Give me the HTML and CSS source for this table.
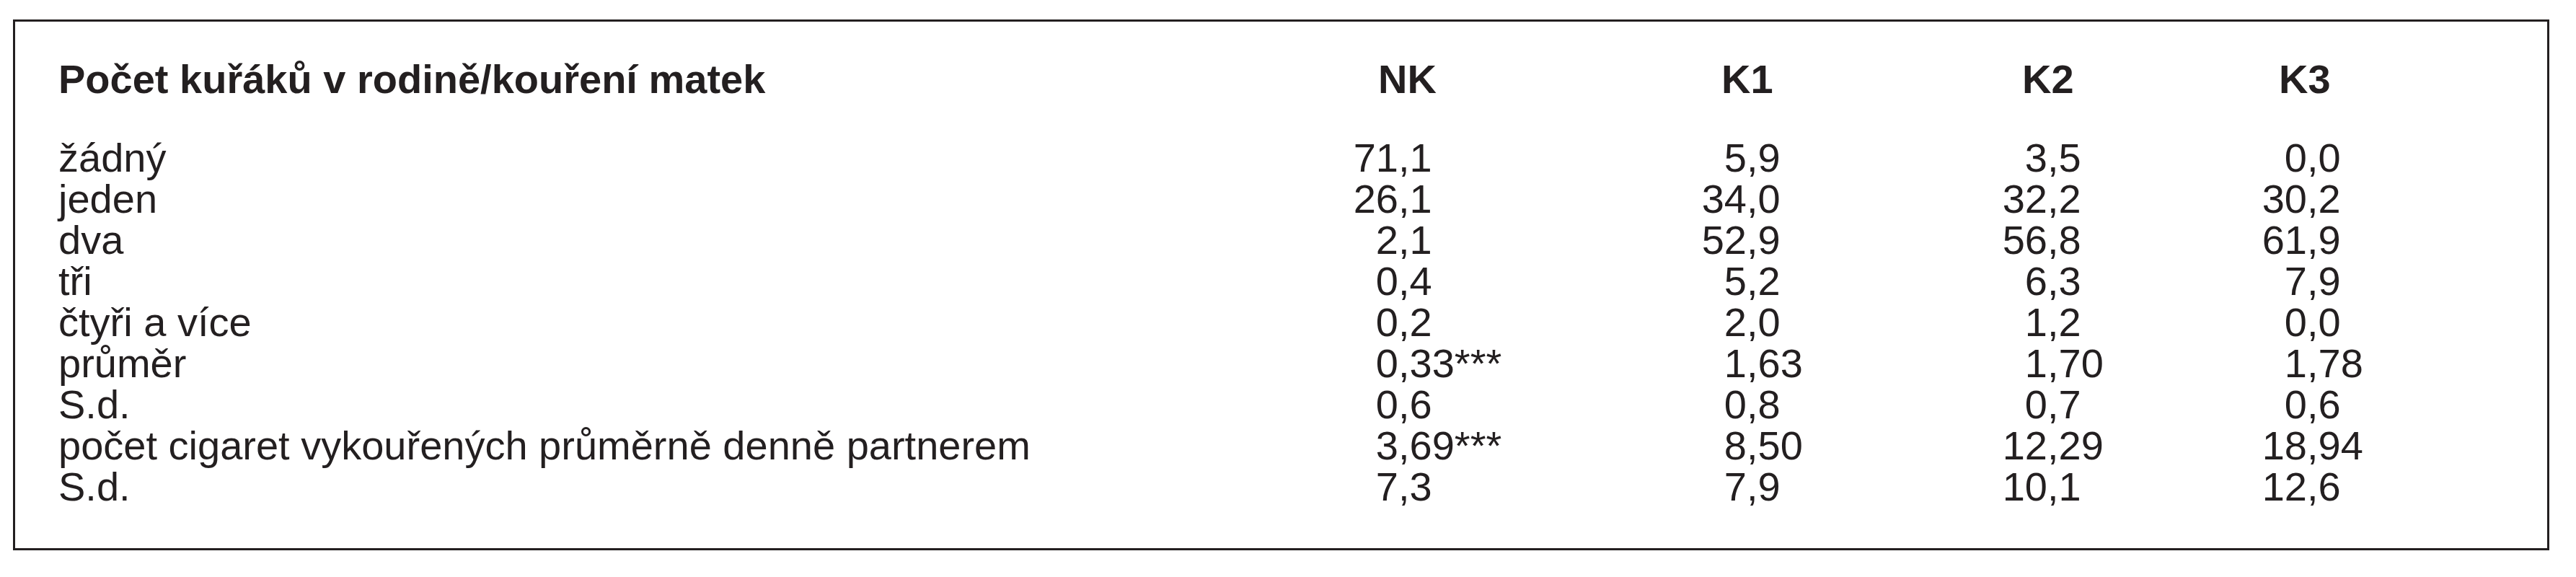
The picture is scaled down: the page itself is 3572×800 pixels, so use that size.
FILE: index.html
```html
<!DOCTYPE html>
<html lang="cs">
<head>
<meta charset="utf-8">
<title>Počet kuřáků v rodině</title>
<link rel="stylesheet" href="styles.css">
</head>
<body>
<div class="box">
  <div class="grid">
    <div class="hd">Počet kuřáků v rodině/kouření matek</div>
    <div class="hd col-nk">NK</div>
    <div class="hd col-k1">K1</div>
    <div class="hd col-k2">K2</div>
    <div class="hd col-k3">K3</div>

    <div class="lbl">žádný</div>
    <div class="num"><span class="i">71</span>,1</div>
    <div class="num"><span class="i">5</span>,9</div>
    <div class="num"><span class="i">3</span>,5</div>
    <div class="num"><span class="i">0</span>,0</div>

    <div class="lbl">jeden</div>
    <div class="num"><span class="i">26</span>,1</div>
    <div class="num"><span class="i">34</span>,0</div>
    <div class="num"><span class="i">32</span>,2</div>
    <div class="num"><span class="i">30</span>,2</div>

    <div class="lbl">dva</div>
    <div class="num"><span class="i">2</span>,1</div>
    <div class="num"><span class="i">52</span>,9</div>
    <div class="num"><span class="i">56</span>,8</div>
    <div class="num"><span class="i">61</span>,9</div>

    <div class="lbl">tři</div>
    <div class="num"><span class="i">0</span>,4</div>
    <div class="num"><span class="i">5</span>,2</div>
    <div class="num"><span class="i">6</span>,3</div>
    <div class="num"><span class="i">7</span>,9</div>

    <div class="lbl">čtyři a více</div>
    <div class="num"><span class="i">0</span>,2</div>
    <div class="num"><span class="i">2</span>,0</div>
    <div class="num"><span class="i">1</span>,2</div>
    <div class="num"><span class="i">0</span>,0</div>

    <div class="lbl">průměr</div>
    <div class="num"><span class="i">0</span>,33***</div>
    <div class="num"><span class="i">1</span>,63</div>
    <div class="num"><span class="i">1</span>,70</div>
    <div class="num"><span class="i">1</span>,78</div>

    <div class="lbl">S.d.</div>
    <div class="num"><span class="i">0</span>,6</div>
    <div class="num"><span class="i">0</span>,8</div>
    <div class="num"><span class="i">0</span>,7</div>
    <div class="num"><span class="i">0</span>,6</div>

    <div class="lbl">počet cigaret vykouřených průměrně denně partnerem</div>
    <div class="num"><span class="i">3</span>,69***</div>
    <div class="num"><span class="i">8</span>,50</div>
    <div class="num"><span class="i">12</span>,29</div>
    <div class="num"><span class="i">18</span>,94</div>

    <div class="lbl">S.d.</div>
    <div class="num"><span class="i">7</span>,3</div>
    <div class="num"><span class="i">7</span>,9</div>
    <div class="num"><span class="i">10</span>,1</div>
    <div class="num"><span class="i">12</span>,6</div>
  </div>
</div>
</body>
</html>
```
FILE: styles.css
```css
html, body {
  margin: 0;
  padding: 0;
  background: #ffffff;
}

body {
  font-family: "Liberation Sans", Arial, sans-serif;
  color: #231f20;
}

.box {
  box-sizing: border-box;
  width: 3517px;
  height: 736px;
  margin: 27px 0 0 18px;
  border: 3px solid #231f20;
  padding: 51px 0 0 60px;
}

.grid {
  display: grid;
  grid-template-columns: 1759px 483px 417px 360px 1fr;
  font-size: 56px;
  line-height: 57px;
  white-space: nowrap;
}

.hd {
  font-weight: bold;
  padding-bottom: 52px;
}

.col-nk { padding-left: 71px; }
.col-k1 { padding-left: 64px; }
.col-k2 { padding-left: 64px; }
.col-k3 { padding-left: 60px; }

.num .i {
  display: inline-block;
  width: 99px;
  text-align: right;
}
```
